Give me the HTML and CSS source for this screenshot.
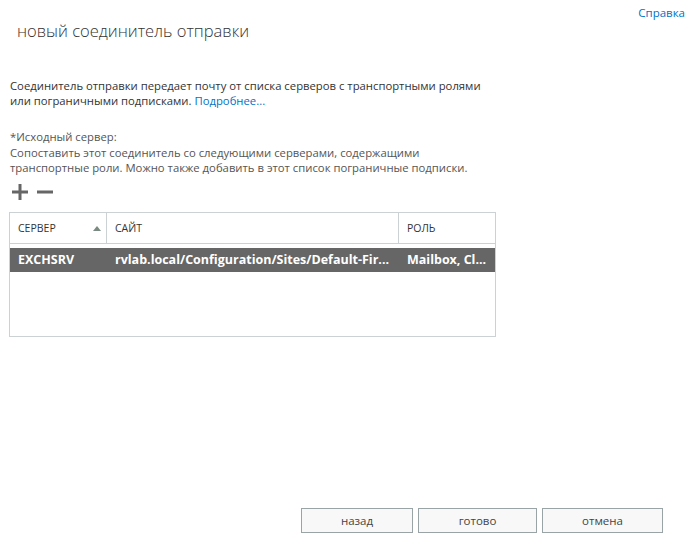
FILE: index.html
```html
<!DOCTYPE html>
<html lang="ru">
<head>
<meta charset="utf-8">
<link rel="stylesheet" href="styles.css">
</head>
<body>
<div class="page">
  <div class="topbar"><a class="help" href="#">Справка</a></div>
  <h1 class="title">новый соединитель отправки</h1>
  <p class="desc"><span>Соединитель отправки передает почту от списка серверов с транспортными ролями</span><br><span>или пограничными подписками.</span> <a href="#" class="link">Подробнее...</a></p>
  <div class="field">
    <div class="label">*Исходный сервер:</div>
    <div class="hint">Сопоставить этот соединитель со следующими серверами, содержащими транспортные роли. Можно также добавить в этот список пограничные подписки.</div>
  </div>
  <div class="tools">
    <svg class="tool" width="16" height="16" viewBox="0 0 16 16"><rect x="0" y="6.5" width="16" height="3" fill="#666"/><rect x="6.5" y="0" width="3" height="16" fill="#666"/></svg>
    <svg class="tool" width="16" height="16" viewBox="0 0 16 16"><rect x="0" y="6.5" width="16" height="3" fill="#666"/></svg>
  </div>
  <div class="grid">
    <div class="row head">
      <div class="cell c1">СЕРВЕР<span class="sort"></span></div>
      <div class="cell c2">САЙТ</div>
      <div class="cell c3">РОЛЬ</div>
    </div>
    <div class="row sel">
      <div class="cell c1">EXCHSRV</div>
      <div class="cell c2">rvlab.local/Configuration/Sites/Default-Fir...</div>
      <div class="cell c3">Mailbox, Cl...</div>
    </div>
  </div>
  <div class="spacer"></div>
  <div class="buttons">
    <button class="btn b1">назад</button>
    <button class="btn b2">готово</button>
    <button class="btn b3">отмена</button>
  </div>
</div>
</body>
</html>
```
FILE: styles.css
```css
html, body {
  margin: 0;
  padding: 0;
  background: #fff;
}
body {
  font-family: "Open Sans", "Noto Sans", sans-serif;
  color: #333;
  font-size: 11.3px;
}
.page {
  width: 691px;
  height: 539px;
  display: flex;
  flex-direction: column;
  box-sizing: border-box;
  padding: 0 0 0 10px;
}
.topbar {
  display: flex;
  justify-content: flex-end;
  padding: 5px 6px 0 0;
  height: 16px;
}
.help {
  color: #0072c6;
  text-decoration: none;
  font-size: 11.5px;
}
.title {
  font-weight: 300;
  font-size: 16.5px;
  margin: -1px 0 0 7px;
  color: #333;
  line-height: 22px;
}
.desc {
  margin: 36px 0 0 0;
  width: 480px;
  line-height: 15px;
  color: #333;
}
.link {
  color: #0072c6;
  text-decoration: none;
}
.field {
  margin-top: 21px;
  width: 490px;
  line-height: 15.5px;
  color: #555;
}
.tools {
  display: flex;
  gap: 9px;
  margin: 8px 0 0 2px;
}
.grid {
  margin-top: 12px;
  margin-left: -1px;
  width: 485px;
  height: 123px;
  border: 1px solid #ccd1d4;
}
.row {
  display: flex;
  align-items: center;
}
.head {
  height: 30px;
  border-bottom: 1px solid #ccd1d4;
  font-size: 10.5px;
  color: #333;
}
.head .cell {
  height: 30px;
  line-height: 30px;
}
.head .c1, .head .c2 {
  border-right: 1px solid #ccd1d4;
}
.cell {
  box-sizing: border-box;
  padding-left: 8px;
  white-space: nowrap;
  overflow: hidden;
}
.c1 { width: 97px; position: relative; }
.c2 { width: 292px; }
.c3 { flex: 1; }
.sort {
  position: absolute;
  right: 5px;
  top: 13px;
  width: 0;
  height: 0;
  border-left: 4px solid transparent;
  border-right: 4px solid transparent;
  border-bottom: 5px solid #7a8a80;
}
.sel {
  margin-top: 4px;
  height: 24px;
  background: #666;
  color: #fff;
  font-weight: bold;
  font-size: 12.5px;
}
.spacer { flex: 1; }
.buttons {
  display: flex;
  gap: 5px;
  margin: 0 0 6px 291px;
}
.btn {
  font-family: inherit;
  font-size: 11.5px;
  color: #444;
  background: #f8f8f8;
  border: 1px solid #9aa4a6;
  height: 25px;
  padding: 0;
}
.b1 { width: 112px; }
.b2 { width: 119px; }
.b3 { width: 121px; }
```
